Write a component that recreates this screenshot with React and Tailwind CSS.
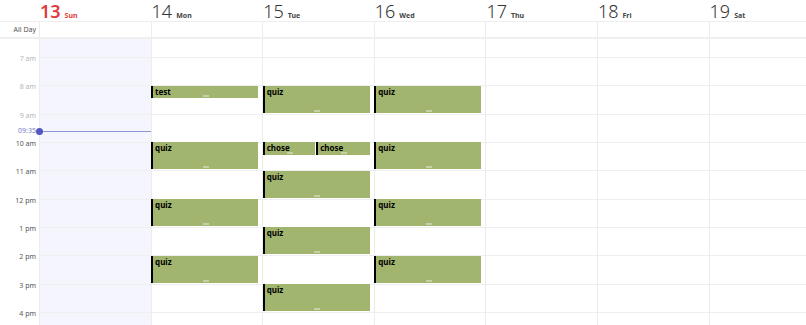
const DAYS = [
  { num: 13, name: 'Sun', today: true },
  { num: 14, name: 'Mon' },
  { num: 15, name: 'Tue' },
  { num: 16, name: 'Wed' },
  { num: 17, name: 'Thu' },
  { num: 18, name: 'Fri' },
  { num: 19, name: 'Sat' },
]

const HOURS = [6, 7, 8, 9, 10, 11, 12, 13, 14, 15, 16]
const HOUR_H = 28.33
const START = 6

// day index -> events (start hour, duration in hours, column slot)
const EVENTS = [
  { day: 1, title: 'test', start: 8, dur: 0.5 },
  { day: 1, title: 'quiz', start: 10, dur: 1 },
  { day: 1, title: 'quiz', start: 12, dur: 1 },
  { day: 1, title: 'quiz', start: 14, dur: 1 },
  { day: 2, title: 'quiz', start: 8, dur: 1 },
  { day: 2, title: 'chose', start: 10, dur: 0.5, slot: 0, of: 2 },
  { day: 2, title: 'chose', start: 10, dur: 0.5, slot: 1, of: 2 },
  { day: 2, title: 'quiz', start: 11, dur: 1 },
  { day: 2, title: 'quiz', start: 13, dur: 1 },
  { day: 2, title: 'quiz', start: 15, dur: 1 },
  { day: 3, title: 'quiz', start: 8, dur: 1 },
  { day: 3, title: 'quiz', start: 10, dur: 1 },
  { day: 3, title: 'quiz', start: 12, dur: 1 },
  { day: 3, title: 'quiz', start: 14, dur: 1 },
]

function label(h) {
  if (h === 12) return '12 pm'
  return h > 12 ? `${h - 12} pm` : `${h} am`
}

function Event({ ev }) {
  const slots = ev.of || 1
  const slot = ev.slot || 0
  const colW = 107
  const w = colW / slots
  return (
    <div
      className="absolute bg-[#a2b56f] border-l-2 border-black"
      style={{
        top: (ev.start - START) * HOUR_H + 0.5,
        height: ev.dur * HOUR_H - 1.5,
        left: -0.5 + slot * w,
        width: w - (slots > 1 && slot === 0 ? 1 : 0),
      }}
    >
      <div className="pl-[2px] pt-[1px] text-[8px] leading-[10px] font-bold text-black">
        {ev.title}
      </div>
      <div className="absolute bottom-[1px] left-1/2 -translate-x-1/2 w-[6px] h-[2px] bg-[#c6cfa6]" />
    </div>
  )
}

export default function App() {
  const cols = 'grid grid-cols-[39px_repeat(7,111.6px)]'
  return (
    <div
      className="w-[806px] h-[325px] overflow-hidden bg-white text-[#333]"
      style={{ fontFamily: '"Noto Sans", "Open Sans", sans-serif' }}
    >
      {/* header */}
      <div className={`${cols} h-[22px] border-b border-[#efefef]`}>
        <div />
        {DAYS.map((d) => (
          <div key={d.num} className="flex items-baseline pl-[1px] pt-[1px]">
            <span
              className={
                d.today
                  ? 'text-[18px] leading-[20px] font-semibold text-[#e03b3b]'
                  : 'text-[18px] leading-[20px] font-light text-[#333]'
              }
            >
              {d.num}
            </span>
            <span
              className={
                d.today
                  ? 'ml-[4px] text-[7px] font-bold text-[#e03b3b]'
                  : 'ml-[4px] text-[7px] font-bold text-[#444]'
              }
            >
              {d.name}
            </span>
          </div>
        ))}
      </div>

      {/* all day */}
      <div className={`${cols} h-[17px] border-b-2 border-[#efefef]`}>
        <div className="flex items-center justify-end pr-[3px] text-[7px] leading-[10px] text-[#555]">
          All Day
        </div>
        {DAYS.map((d) => (
          <div key={d.num} className="border-l border-[#ececec]" />
        ))}
      </div>

      {/* body */}
      <div className="h-[286px] overflow-hidden">
        <div className={`${cols} mt-[-10.33px]`}>
          <div className="relative">
            {HOURS.map((h) => (
              <div key={h} className="relative h-[28.33px]">
                {h > START && (
                  <span
                    className={
                      h < 10
                        ? 'absolute right-[3px] top-[-3px] text-[7px] leading-[10px] text-[#b5b5b5]'
                        : 'absolute right-[3px] top-[-3px] text-[7px] leading-[10px] text-[#555]'
                    }
                  >
                    {label(h)}
                  </span>
                )}
              </div>
            ))}
            <span className="absolute right-[3px] top-[97px] text-[7px] leading-[10px] text-[#7a7cc6]">
              09:35
            </span>
          </div>
          {DAYS.map((d, i) => (
            <div
              key={d.num}
              className={
                d.today
                  ? 'relative border-l border-[#ececec] bg-[#f5f6fd]'
                  : 'relative border-l border-[#ececec]'
              }
            >
              {HOURS.map((h) => (
                <div
                  key={h}
                  className={
                    h > START
                      ? 'h-[28.33px] border-t border-[#efefef]'
                      : 'h-[28.33px]'
                  }
                />
              ))}
              {d.today && (
                <div className="absolute left-[-1px] right-0 top-[102px] h-[1px] bg-[#8f92d6]">
                  <div className="absolute left-[-3px] top-[-3px] w-[7px] h-[7px] rounded-full bg-[#5457c2]" />
                </div>
              )}
              {EVENTS.filter((e) => e.day === i).map((ev, k) => (
                <Event key={k} ev={ev} />
              ))}
            </div>
          ))}
        </div>
      </div>
    </div>
  )
}
